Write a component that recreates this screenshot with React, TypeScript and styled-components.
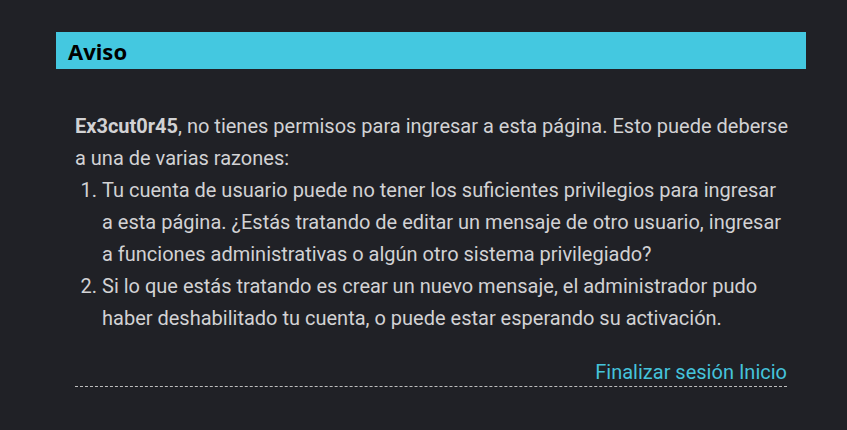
import styled, { createGlobalStyle } from "styled-components";

const GlobalStyle = createGlobalStyle`
  body {
    margin: 0;
    background: #202126;
    font-family: Roboto, "Liberation Sans", sans-serif;
  }
`;

const reasons = [
  "Tu cuenta de usuario puede no tener los suficientes privilegios para ingresar a esta página. ¿Estás tratando de editar un mensaje de otro usuario, ingresar a funciones administrativas o algún otro sistema privilegiado?",
  "Si lo que estás tratando es crear un nuevo mensaje, el administrador pudo haber deshabilitado tu cuenta, o puede estar esperando su activación.",
];

const App = () => {
  return (
    <Page>
      <GlobalStyle />
      <Panel>
        <Header>Aviso</Header>
        <Body>
          <Message>
            <strong>Ex3cut0r45</strong>, no tienes permisos para ingresar a esta
            página. Esto puede deberse a una de varias razones:
          </Message>
          <Reasons>
            {reasons.map((reason, idx) => (
              <li key={idx}>{reason}</li>
            ))}
          </Reasons>
          <Footer>
            <Link href="#">Finalizar sesión</Link> <Link href="#">Inicio</Link>
          </Footer>
        </Body>
      </Panel>
    </Page>
  );
};

const Page = styled.div`
  padding: 32px 41px 40px 56px;
`;

const Panel = styled.section`
  width: 750px;
`;

const Header = styled.h2`
  margin: 0;
  height: 37px;
  padding: 0 12px;
  background: #44c8e0;
  color: #000;
  font-family: "Noto Sans", "Open Sans", sans-serif;
  font-size: 22px;
  font-weight: 700;
  line-height: 38px;
`;

const Body = styled.div`
  padding: 41px 14px 0 19px;
  color: #d2d2d4;
  font-size: 20px;
  line-height: 32px;
`;

const Message = styled.p`
  margin: 0;

  strong {
    font-weight: 700;
  }
`;

const Reasons = styled.ol`
  margin: 0 5px 0 0;
  padding-left: 27px;
`;

const Footer = styled.div`
  margin: 24px 5px 0 0;
  text-align: right;
  line-height: 28px;
  border-bottom: 1px dashed #bdbdbd;
`;

const Link = styled.a`
  color: #45c3db;
  text-decoration: none;
`;

export default App;
